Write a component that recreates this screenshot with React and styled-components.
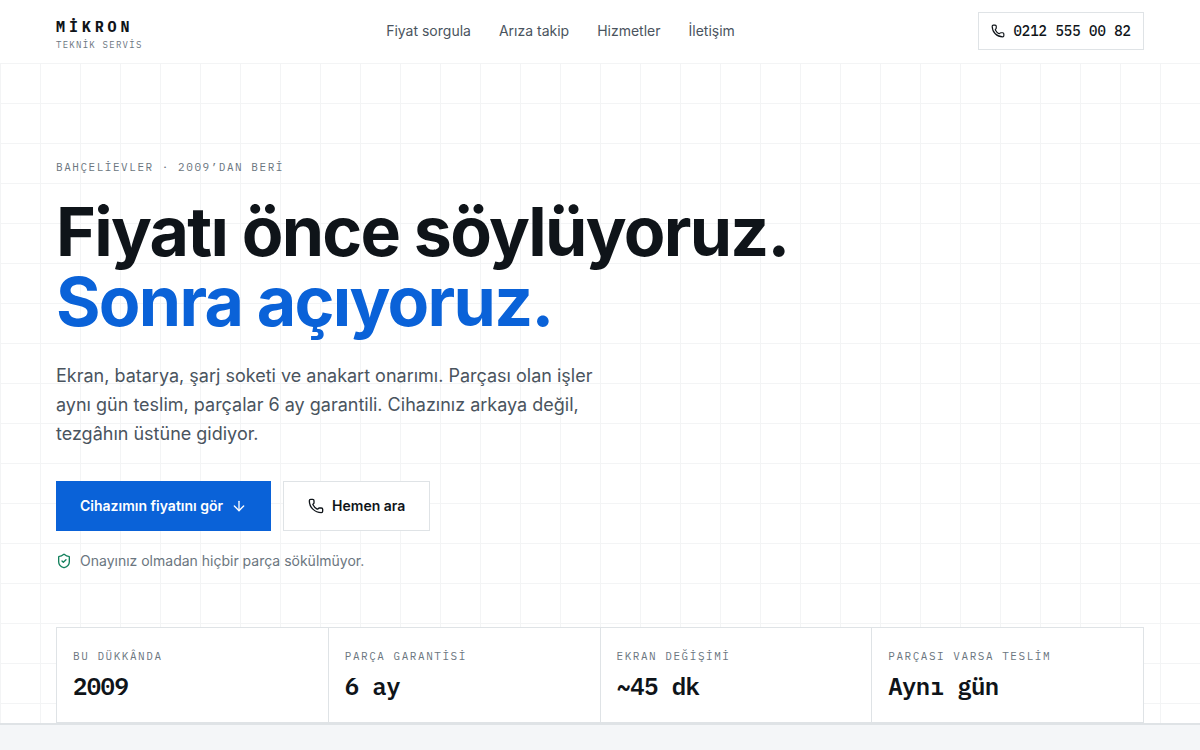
import React from 'react'
import styled, { createGlobalStyle } from 'styled-components'
import { Phone, ArrowDown, ShieldCheck } from 'lucide-react'

const links = [
   { label: 'Fiyat sorgula', href: '#fiyat' },
   { label: 'Arıza takip', href: '#takip' },
   { label: 'Hizmetler', href: '#hizmetler' },
   { label: 'İletişim', href: '#iletisim' },
]

const stats = [
   { label: 'BU DÜKKÂNDA', value: '2009' },
   { label: 'PARÇA GARANTİSİ', value: '6 ay' },
   { label: 'EKRAN DEĞİŞİMİ', value: '~45 dk' },
   { label: 'PARÇASI VARSA TESLİM', value: 'Aynı gün' },
]

const App = () => {
   return (
      <>
         <GlobalStyle />
         <Header>
            <HeaderInner>
               <Brand href="#top">
                  <BrandName>MİKRON</BrandName>
                  <BrandSub>TEKNİK SERVİS</BrandSub>
               </Brand>
               <Nav>
                  {links.map((link) => (
                     <NavLink key={link.href} href={link.href}>
                        {link.label}
                     </NavLink>
                  ))}
               </Nav>
               <PhoneLink href="tel:+902125550082">
                  <Phone size={14} strokeWidth={2} />
                  0212 555 00 82
               </PhoneLink>
            </HeaderInner>
         </Header>
         <Hero id="top">
            <Container>
               <Eyebrow>BAHÇELİEVLER · 2009’DAN BERİ</Eyebrow>
               <Title>
                  Fiyatı önce söylüyoruz.
                  <Accent>Sonra açıyoruz.</Accent>
               </Title>
               <Lead>
                  Ekran, batarya, şarj soketi ve anakart onarımı. Parçası olan işler aynı gün teslim,
                  parçalar 6 ay garantili. Cihazınız arkaya değil, tezgâhın üstüne gidiyor.
               </Lead>
               <Actions>
                  <Action href="#fiyat" $primary>
                     Cihazımın fiyatını gör
                     <ArrowDown size={16} strokeWidth={2} />
                  </Action>
                  <Action href="tel:+902125550082">
                     <Phone size={16} strokeWidth={2} />
                     Hemen ara
                  </Action>
               </Actions>
               <Assurance>
                  <ShieldCheck size={16} strokeWidth={2} />
                  Onayınız olmadan hiçbir parça sökülmüyor.
               </Assurance>
               <Stats>
                  {stats.map((stat) => (
                     <Stat key={stat.label}>
                        <StatLabel>{stat.label}</StatLabel>
                        <StatValue>{stat.value}</StatValue>
                     </Stat>
                  ))}
               </Stats>
            </Container>
         </Hero>
         <NextSection id="fiyat" />
      </>
   )
}

const mono = "'IBM Plex Mono', 'Liberation Mono', monospace"

const GlobalStyle = createGlobalStyle`
   *, *::before, *::after {
      box-sizing: border-box;
   }

   body {
      margin: 0;
      background: #fff;
      color: #0f1419;
      font-family: Inter, 'Liberation Sans', sans-serif;
      overflow-x: hidden;
   }

   html, body, #root {
      height: 100%;
   }

   #root {
      display: flex;
      flex-direction: column;
   }

   a {
      color: inherit;
      text-decoration: none;
   }
`

const Container = styled.div`
   width: 100%;
   max-width: 1200px;
   margin: 0 auto;
   padding: 0 56px;
`

const Header = styled.header`
   background: #fff;
`

const HeaderInner = styled(Container)`
   display: flex;
   align-items: center;
   justify-content: space-between;
   padding-top: 12px;
   padding-bottom: 13px;
`

const Brand = styled.a`
   display: flex;
   flex-direction: column;
   gap: 5px;
   padding-top: 7px;
   font-family: ${mono};
`

const BrandName = styled.span`
   font-size: 15px;
   font-weight: 700;
   line-height: 16px;
   letter-spacing: 0.26em;
`

const BrandSub = styled.span`
   color: #6b7680;
   font-size: 9px;
   line-height: 10px;
   letter-spacing: 0.14em;
`

const Nav = styled.nav`
   display: flex;
   gap: 28px;
`

const NavLink = styled.a`
   color: #4a545e;
   font-size: 14px;
   line-height: 20px;
`

const PhoneLink = styled.a`
   display: flex;
   align-items: center;
   gap: 8px;
   height: 38px;
   padding: 0 12px;
   border: 1px solid #dfe3e6;
   background: #fff;
   font-family: ${mono};
   font-size: 14px;
   font-weight: 500;
`

const Hero = styled.section`
   background-color: #fff;
   background-image:
      linear-gradient(to right, #f3f4f5 1px, transparent 1px),
      linear-gradient(to bottom, #f3f4f5 1px, transparent 1px);
   background-size: 40px 40px;
   border-bottom: 1px solid #dfe3e6;
   padding-top: 96px;
`

const Eyebrow = styled.p`
   margin: 0;
   color: #6b7680;
   font-family: ${mono};
   font-size: 11px;
   line-height: 16px;
   letter-spacing: 0.14em;
`

const Title = styled.h1`
   margin: 21px 0 0;
   font-size: 68px;
   font-weight: 700;
   line-height: 70px;
   letter-spacing: -0.025em;
`

const Accent = styled.span`
   display: block;
   color: #0a62d8;
`

const Lead = styled.p`
   max-width: 560px;
   margin: 25px 0 0;
   color: #4a545e;
   font-size: 18px;
   line-height: 29px;
`

const Actions = styled.div`
   display: flex;
   gap: 12px;
   margin-top: 33px;
`

const Action = styled.a`
   display: flex;
   align-items: center;
   gap: 8px;
   height: 50px;
   padding: 0 24px;
   border: ${(props) => (props.$primary ? 'none' : '1px solid #dfe3e6')};
   background: ${(props) => (props.$primary ? '#0a62d8' : '#fff')};
   color: ${(props) => (props.$primary ? '#fff' : '#0f1419')};
   font-size: 14px;
   font-weight: 600;
   line-height: 20px;
`

const Assurance = styled.p`
   display: flex;
   align-items: center;
   gap: 8px;
   margin: 20px 0 0;
   color: #6b7680;
   font-size: 14px;
   line-height: 20px;

   svg {
      color: #12805c;
   }
`

const Stats = styled.dl`
   display: grid;
   grid-template-columns: repeat(4, 1fr);
   gap: 1px;
   margin: 56px 0 0;
   padding: 1px;
   background: #dfe3e6;
`

const Stat = styled.div`
   padding: 20px 16px;
   background: #fff;
`

const StatLabel = styled.dt`
   color: #6b7680;
   font-family: ${mono};
   font-size: 11px;
   line-height: 16px;
   letter-spacing: 0.14em;
`

const StatValue = styled.dd`
   margin: 6px 0 0;
   font-family: ${mono};
   font-size: 24px;
   font-weight: 600;
   line-height: 32px;
   letter-spacing: -0.025em;
`

const NextSection = styled.section`
   flex: 1;
   border-top: 1px solid #dfe3e6;
   background: #f4f6f8;
`

export default App
